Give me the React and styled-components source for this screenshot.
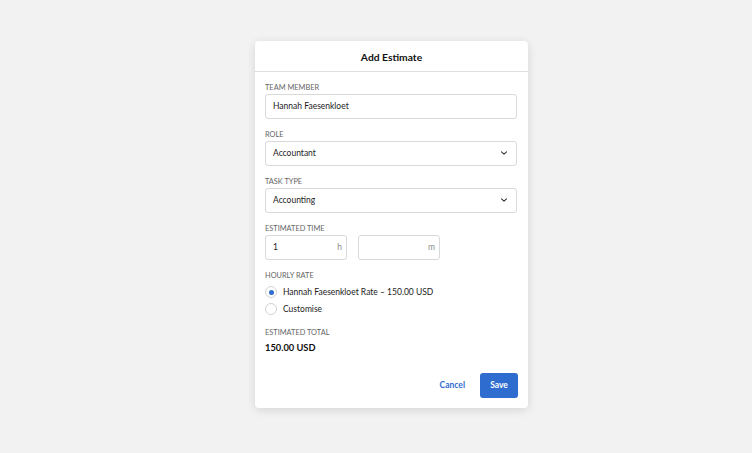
import React from 'react';
import styled, { createGlobalStyle, css } from 'styled-components';

const GlobalStyle = createGlobalStyle`
  html, body {
    margin: 0;
    padding: 0;
    background: #f2f2f2;
  }
  body {
    font-family: Lato, 'Liberation Sans', sans-serif;
  }
  * {
    box-sizing: border-box;
  }
`;

const Page = styled.div`
  width: 752px;
  height: 453px;
  display: flex;
  align-items: center;
  justify-content: center;
  padding-left: 31px;
  padding-bottom: 5px;
`;

const Modal = styled.div`
  width: 273px;
  background: #fff;
  border-radius: 4px;
  box-shadow: 0 2px 10px rgba(0, 0, 0, 0.12);
`;

const Header = styled.div`
  height: 31px;
  padding-top: 2px;
  display: flex;
  align-items: center;
  justify-content: center;
  border-bottom: 1px solid #dedede;
  font-size: 10.3px;
  font-weight: bold;
  color: #111;
`;

const Body = styled.div`
  padding: 10px 11px 10px 10px;
`;

const Field = styled.div`
  margin-bottom: 10px;
  ${(props) =>
    props.tight &&
    css`
      margin-bottom: 8px;
    `}
`;

const Label = styled.div`
  font-size: 7.4px;
  line-height: 10px;
  padding-top: 1px;
  color: #666;
  text-transform: uppercase;
  margin-bottom: 1px;
`;

const InputBox = styled.div`
  height: 25px;
  border: 1px solid #d9d9d9;
  border-radius: 3px;
  display: flex;
  align-items: center;
  justify-content: space-between;
  padding: 0 8px 0 7px;
  font-size: 8.5px;
  color: #1c1c1c;
  ${(props) =>
    props.small &&
    css`
      width: 82px;
      padding-right: 4px;
    `}
`;

const Unit = styled.span`
  color: #8a8a8a;
  font-size: 8.5px;
`;

const TimeRow = styled.div`
  display: flex;
  gap: 11px;
`;

const RadioList = styled.div`
  display: flex;
  flex-direction: column;
  padding-top: 2px;
  padding-bottom: 1px;
`;

const RadioRow = styled.div`
  height: 17px;
  display: flex;
  align-items: center;
  gap: 6px;
  font-size: 8.5px;
  color: #1c1c1c;
`;

const RadioCircle = styled.span`
  width: 12px;
  height: 12px;
  border-radius: 50%;
  border: 1px solid #d3d3d3;
  background: #fff;
  display: flex;
  align-items: center;
  justify-content: center;
  ${(props) =>
    props.checked &&
    css`
      &::after {
        content: '';
        width: 5px;
        height: 5px;
        border-radius: 50%;
        background: #2f6ccf;
      }
    `}
`;

const Total = styled.div`
  font-size: 9.3px;
  line-height: 14px;
  font-weight: bold;
  color: #111;
  margin-top: 3px;
`;

const Footer = styled.div`
  display: flex;
  justify-content: flex-end;
  align-items: center;
  gap: 8px;
  margin-top: 18px;
  margin-right: -1px;
`;

const Button = styled.button`
  font-family: inherit;
  font-size: 8.5px;
  font-weight: bold;
  height: 25px;
  border-radius: 3px;
  border: none;
  cursor: pointer;
  padding: 0 7px;
  background: transparent;
  color: #2f6ccf;
  ${(props) =>
    props.primary &&
    css`
      background: #2f6ccf;
      color: #fff;
      width: 38px;
      padding: 0;
    `}
`;

const Chevron = () => (
  <svg width="8" height="8" viewBox="0 0 8 8" fill="none">
    <path d="M1.5 2.8 L4 5.2 L6.5 2.8" stroke="#333" strokeWidth="1.1" strokeLinecap="round" strokeLinejoin="round" />
  </svg>
);

const App = () => {
  return (
    <>
      <GlobalStyle />
      <Page>
        <Modal>
          <Header>Add Estimate</Header>
          <Body>
            <Field>
              <Label>Team Member</Label>
              <InputBox>Hannah Faesenkloet</InputBox>
            </Field>
            <Field>
              <Label>Role</Label>
              <InputBox>
                Accountant
                <Chevron />
              </InputBox>
            </Field>
            <Field>
              <Label>Task Type</Label>
              <InputBox>
                Accounting
                <Chevron />
              </InputBox>
            </Field>
            <Field>
              <Label>Estimated Time</Label>
              <TimeRow>
                <InputBox small>
                  1<Unit>h</Unit>
                </InputBox>
                <InputBox small>
                  <span />
                  <Unit>m</Unit>
                </InputBox>
              </TimeRow>
            </Field>
            <Field tight>
              <Label>Hourly Rate</Label>
              <RadioList>
                <RadioRow>
                  <RadioCircle checked />
                  Hannah Faesenkloet Rate – 150.00 USD
                </RadioRow>
                <RadioRow>
                  <RadioCircle />
                  Customise
                </RadioRow>
              </RadioList>
            </Field>
            <Label>Estimated Total</Label>
            <Total>150.00 USD</Total>
            <Footer>
              <Button>Cancel</Button>
              <Button primary>Save</Button>
            </Footer>
          </Body>
        </Modal>
      </Page>
    </>
  );
};

export default App;
